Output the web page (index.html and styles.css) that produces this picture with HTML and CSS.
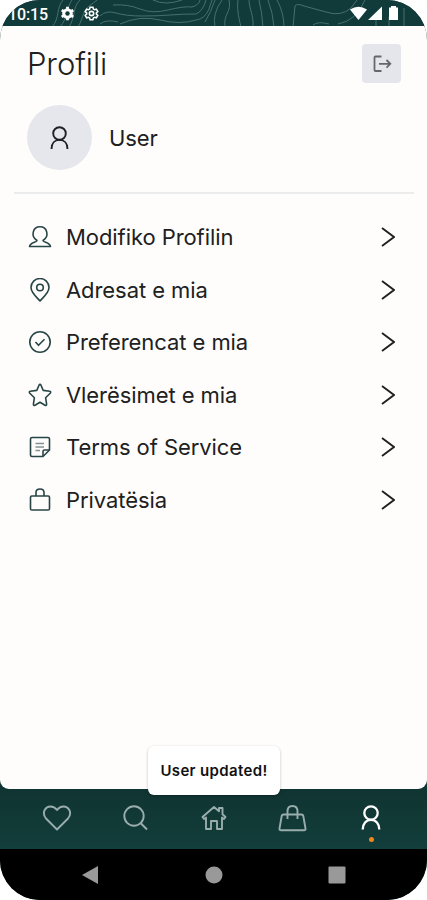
FILE: index.html
```html
<!DOCTYPE html>
<html lang="sq">
<head>
    <meta charset="UTF-8">
    <meta name="viewport" content="width=device-width, initial-scale=1.0">
    <title>Profili</title>
    <link rel="stylesheet" href="styles.css">
</head>
<body>
    <div class="phone">
        <header class="status-bar">
            <!-- Topographic pattern -->
            <svg class="topo" viewBox="0 0 427 27">
                <path d="M52 27C60 18 56 8 63 0M60 27C68 18 66 8 72 0M69 27C76 16 72 8 80 0M78 27C84 17 82 10 92 4L97 0M100 16Q106 10 116 13T142 16T170 15T196 14Q203 11 206 0M100 24Q106 19 118 22M113 5Q128 4 140 9T168 10T192 7Q199 5 200 0M120 24Q140 15 160 20T196 20Q205 19 209 9L212 0M153 0Q165 6 182 0M205 22Q211 12 215 0M215 27Q212 14 222 0M225 27C223 14 232 12 229 0M241 27C238 15 237 8 238 0M253 27C254 16 249 8 249 0M263 27Q262 12 259 0M274 27Q273 13 268 0M284 27Q284 13 277 0M293 27L295 6Q297 3 304 6L326 12Q341 17 351 8L357 0M313 25Q318 21 329 24M338 24Q356 21 365 0M376 27V17M389 27V17M404 27V8"/>
            </svg>
            <div class="status-left">
                <span class="time">10:15</span>
                <svg class="gear" viewBox="0 0 16 16">
                    <circle cx="8" cy="8" r="4" fill="none" stroke="#fff" stroke-width="3.4"/>
                    <path d="M8 .8v14.4M1.8 4.4l12.4 7.2M1.8 11.6l12.4-7.2" stroke="#fff" stroke-width="3"/>
                    <circle cx="8" cy="8" r="2.4" fill="#103b3a"/>
                </svg>
                <svg class="gear" viewBox="0 0 16 16" fill="none" stroke="#fff" stroke-width="1.7">
                    <path d="M6.5 1.3h3l.5 2 1.2.7 2-.6 1.5 2.6-1.5 1.4v1.2l1.5 1.4-1.5 2.6-2-.6-1.2.7-.5 2h-3l-.5-2-1.2-.7-2 .6L1.3 10l1.5-1.4V7.4L1.3 6l1.5-2.6 2 .6L6 3.3z"/>
                    <circle cx="8" cy="8" r="2.3"/>
                </svg>
            </div>
            <svg class="signals" viewBox="0 0 52 16" fill="#fff">
                <path d="M1 4.500Q9.500-1 18 4.500L9.500 15z"/>
                <path d="M33 1.500V15H19z"/>
                <path d="M40 2.500h2V1h5v1.500h2V15h-9z"/>
            </svg>
        </header>

        <main class="page">
            <div class="page-head">
                <h1>Profili</h1>
                <button class="btn-logout" aria-label="Logout">
                    <svg width="20" height="20" viewBox="0 0 20 20">
                        <path d="M9.500 2.500H3.500Q2.500 2.500 2.500 3.500v12.500q0 1 1 1h6M7 9.800h11M14.500 6l3.800 3.800-3.800 3.800"/>
                    </svg>
                </button>
            </div>

            <div class="user">
                <div class="avatar">
                    <svg width="20" height="26" viewBox="0 0 20 26">
                        <circle cx="9.500" cy="8.500" r="6.300"/>
                        <path d="M1.500 24c0-5.500 3.200-9.100 8-9.100s8 3.600 8 9.100"/>
                    </svg>
                </div>
                <span class="user-name">User</span>
            </div>

            <ul class="menu">
                <li>
                    <svg class="icon" viewBox="0 0 24 24">
                        <path d="M9 15.500C2.500 11.500 4.500 1.800 12 1.800s9.500 9.700 3 13.700c0 2 7 1.800 7.500 6H1.500c.5-4.200 7.500-4 7.500-6z"/>
                    </svg>
                    <span>Modifiko Profilin</span>
                    <svg class="chevron" viewBox="0 0 14 20"><path d="M1 1l12 9L1 19"/></svg>
                </li>
                <li>
                    <svg class="icon" viewBox="0 0 24 24">
                        <path d="M12 23C8 18.500 3 14.500 3 9.500a9 9 0 0 1 18 0c0 5-5 9-9 13.500z"/>
                        <circle cx="12" cy="9.500" r="3.300"/>
                    </svg>
                    <span>Adresat e mia</span>
                    <svg class="chevron" viewBox="0 0 14 20"><path d="M1 1l12 9L1 19"/></svg>
                </li>
                <li>
                    <svg class="icon" viewBox="0 0 24 24">
                        <circle cx="12" cy="12" r="10.200"/>
                        <path d="M7.500 12l3 3.300 6-6"/>
                    </svg>
                    <span>Preferencat e mia</span>
                    <svg class="chevron" viewBox="0 0 14 20"><path d="M1 1l12 9L1 19"/></svg>
                </li>
                <li>
                    <svg class="icon" viewBox="0 0 24 24">
                        <path d="M11 2.200Q12 .5 13 2.200l2.200 5.200 6.500.9q1.700.5.500 1.900l-4.600 4.500 1 6.500q0 1.700-1.600 1.100L12 19.200l-5 3.100q-1.600.6-1.600-1.100l1-6.500-4.600-4.500Q.6 8.800 2.300 8.300l6.500-.9z"/>
                    </svg>
                    <span>Vlerësimet e mia</span>
                    <svg class="chevron" viewBox="0 0 14 20"><path d="M1 1l12 9L1 19"/></svg>
                </li>
                <li>
                    <svg class="icon" viewBox="0 0 24 24">
                        <path d="M4 2.500h16q1.500 0 1.500 1.500v11L15 21.500H4Q2.500 21.500 2.500 20V4Q2.500 2.500 4 2.500z"/>
                        <path d="M15 21v-4.500q0-1.500 1.500-1.500H21"/>
                        <path class="light" d="M7.500 8.500h8.500M7.500 12h8.500M7.500 15.500h4.500"/>
                    </svg>
                    <span>Terms of Service</span>
                    <svg class="chevron" viewBox="0 0 14 20"><path d="M1 1l12 9L1 19"/></svg>
                </li>
                <li>
                    <svg class="icon" viewBox="0 0 24 24">
                        <rect x="2.500" y="8" width="19" height="14" rx="1.300"/>
                        <path d="M8 8V4.500Q8 1 12 1t4 3.500V8"/>
                    </svg>
                    <span>Privatësia</span>
                    <svg class="chevron" viewBox="0 0 14 20"><path d="M1 1l12 9L1 19"/></svg>
                </li>
            </ul>
        </main>

        <nav class="tab-bar">
            <a class="tab">
                <svg viewBox="0 0 30 30"><path d="M15 26.500 4 15.500C-1 9 4 3.500 8.500 3.500c3 0 5 1.500 6.500 3.500 1.500-2 3.500-3.500 6.500-3.500C26 3.500 31 9 26 15.500z"/></svg>
            </a>
            <a class="tab">
                <svg viewBox="0 0 30 30"><circle cx="13" cy="13" r="9.700"/><path d="M19.500 20l6.500 6.500"/></svg>
            </a>
            <a class="tab">
                <svg viewBox="0 0 30 30"><path d="M3.500 14 15 4l5 4.300V5h3.500v6.300l3 2.700-1.500 2-2-1.500V26h-5v-8h-6v8H7V14.500L5 16z"/></svg>
            </a>
            <a class="tab">
                <svg viewBox="0 0 30 30"><path d="M5.500 11.500h18q1.500 0 1.800 1.500l2.200 12.500q.2 1.800-1.500 1.800H3q-1.700 0-1.500-1.800L3.700 13q.3-1.500 1.800-1.500zM9.500 16V8.500q0-5.500 5-5.500t5 5.500V16"/></svg>
            </a>
            <a class="tab active">
                <svg viewBox="0 0 30 30"><circle cx="15" cy="10" r="6.700"/><path d="M6.700 26.500c0-6 3.500-9.700 8.300-9.700s8.300 3.700 8.300 9.700"/></svg>
            </a>
        </nav>

        <div class="toast">User updated!</div>

        <footer class="system-nav">
            <svg width="18" height="20" viewBox="0 0 18 20"><path d="M17 1v18L1 10z"/></svg>
            <svg width="18" height="18" viewBox="0 0 18 18"><circle cx="9" cy="9" r="8.500"/></svg>
            <svg width="18" height="18" viewBox="0 0 18 18"><rect x=".5" y=".5" width="17" height="17" rx="1"/></svg>
        </footer>
    </div>
</body>
</html>
```
FILE: styles.css
```css
* {
    box-sizing: border-box;
}

body {
    margin: 0;
    background-color: #fff;
    font-family: Inter, "Liberation Sans", sans-serif;
    color: #202020;
}

svg {
    display: block;
}

.phone {
    position: relative; /* Anchor for the toast */
    display: flex;
    flex-direction: column;
    width: 427px;
    height: 900px;
    overflow: hidden;
    border-radius: 40px;
    background-color: #103431;
}

/* Status bar */
.status-bar {
    position: relative;
    display: flex;
    justify-content: space-between;
    height: 26px;
    padding: 6px 26px 0 8px;
    overflow: hidden;
    background-color: #103b3a;
}

.topo {
    position: absolute; /* Sits behind the status icons */
    top: 0;
    left: 0;
    width: 427px;
    height: 27px;
    fill: none;
    stroke: #47706d;
    stroke-width: 1;
}

.status-left {
    position: relative;
    display: flex;
    gap: 9px;
}

.time {
    width: 43px;
    color: #fff;
    font-family: Roboto, sans-serif;
    font-size: 16px;
    font-weight: 500;
    letter-spacing: -0.1px;
    line-height: 17px;
}

.gear {
    width: 15px;
    height: 15px;
}

.signals {
    position: relative;
    width: 52px;
    height: 16px;
    margin-top: -1px;
}

/* Page */
.page {
    flex: 1;
    padding: 0 13px 0 14px;
    border-radius: 0 0 9px 9px;
    background-color: #fefdfc;
}

.page-head {
    display: flex;
    justify-content: space-between;
    align-items: center;
    padding: 18px 13px 0 13px;
}

h1 {
    margin: 0;
    font-size: 31px;
    font-weight: 300;
    letter-spacing: -0.1px;
    line-height: 39px;
}

.btn-logout {
    display: flex;
    justify-content: center;
    align-items: center;
    width: 39px;
    height: 39px;
    padding: 0;
    border: none;
    border-radius: 4px;
    background-color: #e5e6eb;
}

.btn-logout svg {
    fill: none;
    stroke: #66676b;
    stroke-width: 1.8;
}

.user {
    display: flex;
    align-items: center;
    gap: 17px;
    height: 111px;
    padding: 0 0 0 13px;
    border-bottom: 2px solid #ececec;
}

.avatar {
    display: flex;
    justify-content: center;
    align-items: center;
    width: 65px;
    height: 65px;
    border-radius: 50%;
    background-color: #e5e7ec;
}

.avatar svg {
    fill: none;
    stroke: #202124;
    stroke-width: 1.9;
}

.user-name {
    font-size: 22px;
    letter-spacing: -0.1px;
}

.menu {
    margin: 0;
    padding: 17px 19px 0 14px;
    list-style: none;
}

.menu li {
    display: flex;
    align-items: center;
    height: 52.5px;
    font-size: 22px;
    letter-spacing: -0.07px;
}

.menu span {
    flex: 1;
    margin-left: 14px;
}

.icon {
    width: 24px;
    height: 24px;
    margin-left: -0.5px;
    margin-right: 0.5px;
    fill: none;
    stroke: #274544;
    stroke-width: 1.6;
    stroke-linejoin: round;
}

.icon .light {
    stroke: #829190;
}

.chevron {
    width: 14px;
    height: 20px;
    fill: none;
    stroke: #202020;
    stroke-width: 1.9;
}

/* Bottom tabs */
.tab-bar {
    display: flex;
    justify-content: space-between;
    align-items: flex-start;
    height: 60px;
    padding: 14px 41px 0 42px;
    background: linear-gradient(#103431, #123e3b);
}

.tab {
    position: relative;
}

.tab svg {
    width: 30px;
    height: 30px;
    fill: none;
    stroke: #9aadad;
    stroke-width: 1.9;
    stroke-linejoin: round;
}

.tab.active svg {
    stroke: #fff;
    stroke-width: 2.3;
}

.tab.active::after {
    content: "";
    position: absolute;
    left: 13px;
    bottom: -9px;
    width: 5px;
    height: 5px;
    border-radius: 50%;
    background-color: #f08519;
}

.toast {
    position: absolute; /* Floats over the page and the tabs */
    top: 746px;
    left: 148px;
    width: 132px;
    height: 49px;
    border-radius: 6px;
    background-color: #fff;
    box-shadow: 0 1px 3px rgba(0, 0, 0, 0.25);
    color: #111;
    font-size: 15px;
    font-weight: 600;
    letter-spacing: 0.35px;
    line-height: 49px;
    text-align: center;
    white-space: nowrap;
}

/* Android navigation */
.system-nav {
    display: flex;
    justify-content: space-between;
    align-items: center;
    height: 51px;
    padding: 0 81px 0 81px;
    background-color: #000;
}

.system-nav svg {
    fill: #999;
}
```
